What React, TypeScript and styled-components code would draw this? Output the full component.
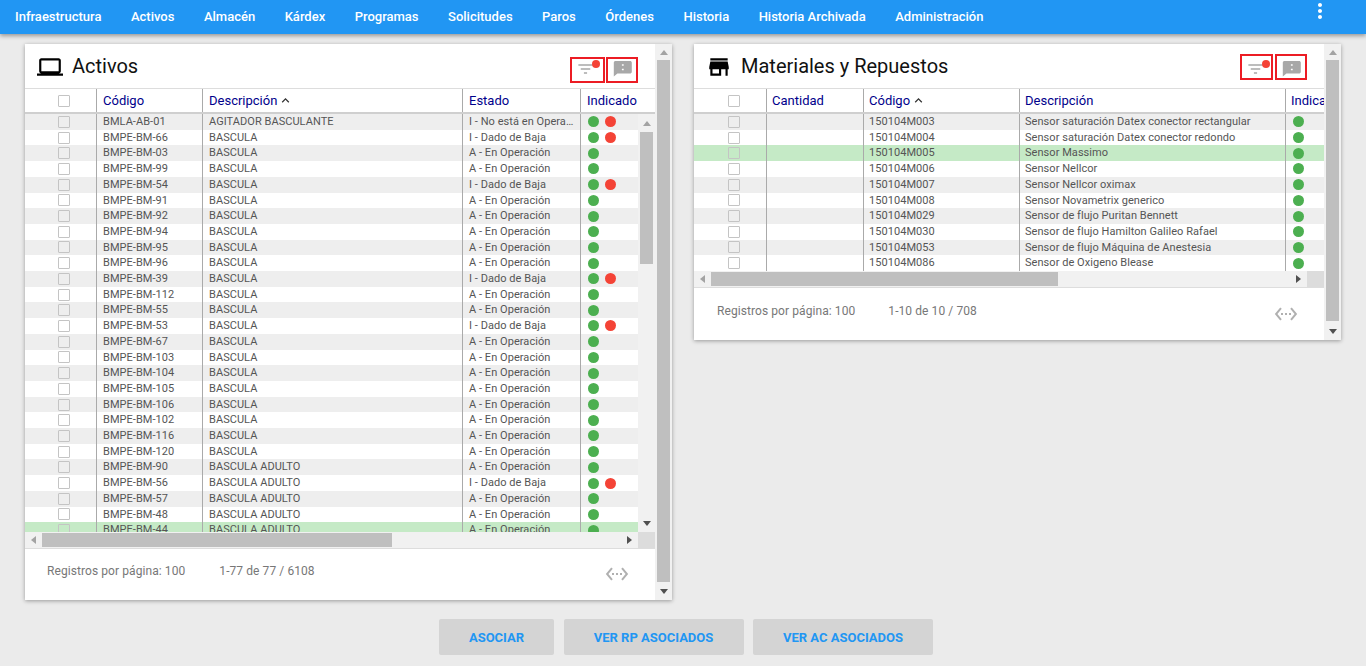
import React from "react";
import styled, { createGlobalStyle } from "styled-components";

const Global = createGlobalStyle`
  html, body { margin: 0; padding: 0; height: 100%; overflow: hidden; background: #ebebeb; }
  body { font-family: Roboto, "Liberation Sans", sans-serif; }
  * { box-sizing: border-box; }
`;

const Page = styled.div`
  width: 1366px;
  height: 666px;
  display: flex;
  flex-direction: column;
  background: #ebebeb;
`;
const Nav = styled.nav`
  height: 34px;
  flex: none;
  display: flex;
  align-items: center;
  background: #2196f3;
  padding: 0 34px 0 15px;
  gap: 29.5px;
  box-shadow: 0 2px 4px rgba(0, 0, 0, 0.35);
  position: relative;
  z-index: 2;
`;
const NavItem = styled.a`
  color: #fff;
  font-size: 13px;
  font-weight: 500;
  line-height: 34px;
`;
const NavMenu = styled.svg`
  margin-left: auto;
  width: 24px;
  height: 24px;
  margin-top: -13px;
  fill: #fff;
`;
const Columns = styled.main`
  display: flex;
  align-items: flex-start;
  gap: 22px;
  padding: 10px 25px 0;
  height: 575px;
  flex: none;
`;
const Card = styled.section<{ $pad: number }>`
  --cell-pad: ${(p) => p.$pad}px;
  width: 647px;
  display: flex;
  background: #fff;
  box-shadow: 0 1px 4px rgba(0, 0, 0, 0.35);
`;
const CardBody = styled.div`
  flex: 1;
  min-width: 0;
  display: flex;
  flex-direction: column;
`;
const CardHead = styled.header`
  height: 44px;
  display: flex;
  padding: 0 17px 0 12px;
  align-items: flex-start;
  gap: 9px;
  & > .title-icon { width: 26px; height: 26px; margin-top: 10px; fill: #000; flex: none; }
`;
const Title = styled.h2`
  margin: 9px 0 0;
  font-size: 20px;
  line-height: 26px;
  font-weight: 400;
  color: #111;
`;
const ActionGroup = styled.div<{ $top: number; $gap: number }>`
  margin-left: auto;
  margin-top: ${(p) => p.$top}px;
  display: flex;
  gap: ${(p) => p.$gap}px;
`;
const ActionBox = styled.div<{ $w: number }>`
  position: relative;
  width: ${(p) => p.$w}px;
  height: 26px;
  border: 2px solid #ec1c24;
  display: flex;
  align-items: center;
  justify-content: center;
`;
const FilterIcon = styled.svg<{ $dx: number; $dy: number }>`
  width: 19px;
  height: 19px;
  transform: translate(${(p) => p.$dx}px, ${(p) => p.$dy}px);
  fill: #a8a8a8;
`;
const ChatIcon = styled.svg<{ $dy: number }>`
  width: 21.6px;
  height: 18.6px;
  transform: translate(1px, ${(p) => p.$dy}px);
  fill: #a8a8a8;
`;
const Badge = styled.span<{ $top: number; $right: number }>`
  position: absolute;
  top: ${(p) => p.$top}px;
  right: ${(p) => p.$right}px;
  width: 8px;
  height: 8px;
  border-radius: 50%;
  background: #f44336;
`;
const HeadRow = styled.div<{ $cols: string }>`
  display: grid;
  grid-template-columns: ${(p) => p.$cols};
  height: 26px;
  border-top: 1px solid #ddd;
  border-bottom: 2px solid #cfcfcf;
  overflow: hidden;
`;
const HeadCell = styled.div`
  display: flex;
  align-items: center;
  padding-left: var(--cell-pad);
  border-left: 1px solid #aaa;
  font-size: 13px;
  font-weight: 400;
  color: #00008b;
  white-space: nowrap;
  overflow: hidden;
  & > svg { width: 15px; height: 15px; fill: #333; margin-left: 1px; }
`;
const CheckCell = styled.div<{ $shift: number }>`
  display: flex;
  align-items: center;
  justify-content: center;
  padding-left: ${(p) => p.$shift}px;
`;
const Check = styled.span`
  display: block;
  width: 12px;
  height: 12px;
  background: #fff;
  border: 1px solid #c4c4c4;
  border-radius: 1px;
`;
const FadedCheck = styled(Check)`
  background: transparent;
`;
const TableArea = styled.div`
  display: flex;
`;
const Rows = styled.div<{ $h: number }>`
  flex: 1;
  min-width: 0;
  height: ${(p) => p.$h}px;
  overflow: hidden;
`;
const Row = styled.div<{ $cols: string; $kind: "odd" | "even" | "sel" }>`
  display: grid;
  grid-template-columns: ${(p) => p.$cols};
  height: 15.71px;
  background: ${(p) => (p.$kind === "sel" ? "#c5eac6" : p.$kind === "odd" ? "#eeeeee" : "#fff")};
`;
const Cell = styled.div`
  border-left: 1px solid #aaa;
  padding: 0 5px 0 var(--cell-pad);
  font-size: 11px;
  line-height: 15.71px;
  letter-spacing: 0.05px;
  color: #555;
  white-space: nowrap;
  overflow: hidden;
  text-overflow: ellipsis;
`;
const DotCell = styled.div`
  border-left: 1px solid #aaa;
  padding-left: 7px;
  display: flex;
  align-items: center;
  gap: 6px;
  overflow: hidden;
`;
const Dot = styled.span<{ $red?: boolean }>`
  width: 11px;
  height: 11px;
  flex: none;
  border-radius: 50%;
  background: ${(p) => (p.$red ? "#f44336" : "#4caf50")};
`;
const VBar = styled.div<{ $h?: number }>`
  width: 17px;
  ${(p) => (p.$h ? `height: ${p.$h}px;` : "")}
  flex: none;
  display: flex;
  flex-direction: column;
  background: #f1f1f1;
`;
const VSpacer = styled.div<{ $h: number }>`
  height: ${(p) => p.$h}px;
  flex: none;
  display: flex;
  align-items: center;
  justify-content: center;
`;
const VThumb = styled.div<{ $h: number }>`
  height: ${(p) => p.$h}px;
  flex: none;
  margin: 0 2px;
  background: #bfbfbf;
`;
const VFill = styled.div`
  flex: 1;
  display: flex;
  flex-direction: column;
  justify-content: flex-end;
`;
const ArrowUp = styled.span`
  width: 0;
  height: 0;
  border-left: 4px solid transparent;
  border-right: 4px solid transparent;
  border-bottom: 5px solid #a3a3a3;
`;
const ArrowDown = styled.span`
  width: 0;
  height: 0;
  border-left: 4px solid transparent;
  border-right: 4px solid transparent;
  border-top: 5px solid #505050;
`;
const ArrowLeft = styled.span`
  width: 0;
  height: 0;
  border-top: 4px solid transparent;
  border-bottom: 4px solid transparent;
  border-right: 5px solid #a3a3a3;
`;
const ArrowRight = styled.span`
  width: 0;
  height: 0;
  border-top: 4px solid transparent;
  border-bottom: 4px solid transparent;
  border-left: 5px solid #505050;
`;
const HBar = styled.div`
  height: 16px;
  flex: none;
  display: flex;
  background: #f1f1f1;
`;
const HEnd = styled.div`
  width: 17px;
  flex: none;
  display: flex;
  align-items: center;
  justify-content: center;
`;
const HThumb = styled.div<{ $w: number }>`
  width: ${(p) => p.$w}px;
  margin: 1px 0;
  background: #bfbfbf;
`;
const HFill = styled.div`
  flex: 1;
`;
const Corner = styled.div`
  width: 17px;
  flex: none;
  background: #dcdcdc;
`;
const Footer = styled.footer<{ $h: number; $top: number; $left: number; $gap: number }>`
  height: ${(p) => p.$h}px;
  border-top: 1px solid #ddd;
  display: flex;
  padding: 0 26px 0 ${(p) => p.$left}px;
  font-size: 12px;
  letter-spacing: 0.08px;
  color: #777;
  & > span { margin-top: ${(p) => p.$top}px; line-height: 14px; }
  & > span + span { margin-left: ${(p) => p.$gap}px; }
  & > svg { margin: ${(p) => p.$top - 2}px 0 0 auto; width: 24px; height: 24px; fill: #b0b0b0; }
`;
const Buttons = styled.div`
  display: flex;
  justify-content: center;
  gap: 9.5px;
  padding-left: 6px;
  margin-top: 10px;
`;
const Btn = styled.button<{ $w: number }>`
  width: ${(p) => p.$w}px;
  height: 36px;
  border: 0;
  border-radius: 2px;
  background: #d4d4d4;
  color: #2196f3;
  font: 700 13px Roboto, sans-serif;
  text-transform: uppercase;
`;

const NAV = ["Infraestructura","Activos","Almacén","Kárdex","Programas","Solicitudes","Paros","Órdenes","Historia","Historia Archivada","Administración"];

const Ic = {
  laptop: "M20 18c1.1 0 1.99-.9 1.99-2L22 6c0-1.1-.9-2-2-2H4c-1.1 0-2 .9-2 2v10c0 1.1.9 2 2 2H0v2h24v-2h-4zM4 6h16v10H4V6z",
  store: "M20 4H4v2h16V4zm1 10v-2l-1-5H4l-1 5v2h1v6h10v-6h4v6h2v-6h1zm-9 4H6v-4h6v4z",
  filter: "M10 18h4v-2h-4v2zM3 6v2h18V6H3zm3 7h12v-2H6v2z",
  chat: "M20 2H4c-1.1 0-1.99.9-1.99 2L2 22l4-4h14c1.1 0 2-.9 2-2V4c0-1.1-.9-2-2-2zm-7 6h-2V6h2v2zm0 6h-2v-2h2v2z",
  code: "M7.77 6.76L6.23 5.48.82 12l5.41 6.52 1.54-1.28L3.42 12l4.35-5.24zM7 13h2v-2H7v2zm10-2h-2v2h2v-2zm-6 2h2v-2h-2v2zm6.77-7.52l-1.54 1.28L20.58 12l-4.35 5.24 1.54 1.28L23.18 12l-5.41-6.52z",
  up: "M12 8l-6 6 1.41 1.41L12 10.83l4.59 4.58L18 14z",
  more: "M12 8c1.1 0 2-.9 2-2s-.9-2-2-2-2 .9-2 2 .9 2 2 2zm0 2c-1.1 0-2 .9-2 2s.9 2 2 2 2-.9 2-2-.9-2-2-2zm0 6c-1.1 0-2 .9-2 2s.9 2 2 2 2-.9 2-2-.9-2-2-2z",
};
const Icon = ({ d, className }: { d: string; className?: string }) => (
  <svg viewBox="0 0 24 24" className={className}><path d={d} /></svg>
);

const A = "A - En Operación";
const I = "I - Dado de Baja";
const B = "BASCULA";
const BA = "BASCULA ADULTO";
const ASSETS: [string, string, string, boolean?][] = [
  ["BMLA-AB-01", "AGITADOR BASCULANTE", "I - No está en Operación", true],
  ["BMPE-BM-66", B, I, true], ["BMPE-BM-03", B, A], ["BMPE-BM-99", B, A],
  ["BMPE-BM-54", B, I, true], ["BMPE-BM-91", B, A], ["BMPE-BM-92", B, A],
  ["BMPE-BM-94", B, A], ["BMPE-BM-95", B, A], ["BMPE-BM-96", B, A],
  ["BMPE-BM-39", B, I, true], ["BMPE-BM-112", B, A], ["BMPE-BM-55", B, A],
  ["BMPE-BM-53", B, I, true], ["BMPE-BM-67", B, A], ["BMPE-BM-103", B, A],
  ["BMPE-BM-104", B, A], ["BMPE-BM-105", B, A], ["BMPE-BM-106", B, A],
  ["BMPE-BM-102", B, A], ["BMPE-BM-116", B, A], ["BMPE-BM-120", B, A],
  ["BMPE-BM-90", BA, A], ["BMPE-BM-56", BA, I, true], ["BMPE-BM-57", BA, A],
  ["BMPE-BM-48", BA, A], ["BMPE-BM-44", BA, A],
];
const PARTS: [string, string][] = [
  ["150104M003", "Sensor saturación Datex conector rectangular"],
  ["150104M004", "Sensor saturación Datex conector redondo"],
  ["150104M005", "Sensor Massimo"],
  ["150104M006", "Sensor Nellcor"],
  ["150104M007", "Sensor Nellcor oximax"],
  ["150104M008", "Sensor Novametrix generico"],
  ["150104M029", "Sensor de flujo Puritan Bennett"],
  ["150104M030", "Sensor de flujo Hamilton Galileo Rafael"],
  ["150104M053", "Sensor de flujo Máquina de Anestesia"],
  ["150104M086", "Sensor de Oxigeno Blease"],
];

const COLS_L = "71px 106px 260px 118px 1fr";
const COLS_R = "72px 97px 156px 266px 1fr";

const kind = (i: number, sel: number): "odd" | "even" | "sel" =>
  i === sel ? "sel" : i % 2 === 0 ? "odd" : "even";

type ActionsProps = { top: number; gap: number; w1: number; dx: number; dy: number; badgeTop: number; badgeRight: number };
const Actions = ({ top, gap, w1, dx, dy, badgeTop, badgeRight }: ActionsProps) => (
  <ActionGroup $top={top} $gap={gap}>
    <ActionBox $w={w1}>
      <FilterIcon viewBox="0 0 24 24" $dx={dx} $dy={dy}><path d={Ic.filter} /></FilterIcon>
      <Badge $top={badgeTop} $right={badgeRight} />
    </ActionBox>
    <ActionBox $w={32}>
      <ChatIcon viewBox="0 0 24 24" preserveAspectRatio="none" $dy={dy}><path d={Ic.chat} /></ChatIcon>
    </ActionBox>
  </ActionGroup>
);

const OuterScroll = ({ thumb }: { thumb: number }) => (
  <VBar>
    <VSpacer $h={16}><ArrowUp /></VSpacer>
    <VThumb $h={thumb} />
    <VFill><VSpacer $h={18}><ArrowDown /></VSpacer></VFill>
  </VBar>
);

const HScroll = ({ thumb }: { thumb: number }) => (
  <HBar>
    <HEnd><ArrowLeft /></HEnd>
    <HThumb $w={thumb} />
    <HFill />
    <HEnd><ArrowRight /></HEnd>
    <Corner />
  </HBar>
);

export default function App() {
  return (
    <Page>
      <Global />
      <Nav>
        {NAV.map((n) => <NavItem key={n}>{n}</NavItem>)}
        <NavMenu viewBox="0 0 24 24"><path d={Ic.more} /></NavMenu>
      </Nav>
      <Columns>
        <Card $pad={6}>
          <CardBody>
            <CardHead>
              <Icon d={Ic.laptop} className="title-icon" />
              <Title>Activos</Title>
              <Actions top={13} gap={1} w1={35} dx={-2} dy={-1.5} badgeTop={1} badgeRight={3} />
            </CardHead>
            <HeadRow $cols={COLS_L + " 17px"}>
              <CheckCell $shift={6}><Check /></CheckCell>
              <HeadCell>Código</HeadCell>
              <HeadCell>Descripción<Icon d={Ic.up} /></HeadCell>
              <HeadCell>Estado</HeadCell>
              <HeadCell>Indicado</HeadCell>
            </HeadRow>
            <TableArea>
              <Rows $h={418}>
                {ASSETS.map((r, i) => (
                  <Row key={r[0]} $cols={COLS_L} $kind={kind(i, 26)}>
                    <CheckCell $shift={6}>{i % 2 === 0 ? <FadedCheck /> : <Check />}</CheckCell>
                    <Cell>{r[0]}</Cell>
                    <Cell>{r[1]}</Cell>
                    <Cell>{r[2]}</Cell>
                    <DotCell><Dot />{r[3] && <Dot $red />}</DotCell>
                  </Row>
                ))}
              </Rows>
              <VBar $h={418}>
                <VSpacer $h={18}><ArrowUp /></VSpacer>
                <VThumb $h={132} />
                <VFill><VSpacer $h={18}><ArrowDown /></VSpacer></VFill>
              </VBar>
            </TableArea>
            <HScroll thumb={350} />
            <Footer $h={51} $top={15} $left={22} $gap={34}>
              <span>Registros por página: 100</span>
              <span>1-77 de 77 / 6108</span>
              <Icon d={Ic.code} />
            </Footer>
          </CardBody>
          <OuterScroll thumb={522} />
        </Card>
        <Card $pad={5}>
          <CardBody>
            <CardHead>
              <Icon d={Ic.store} className="title-icon" />
              <Title>Materiales y Repuestos</Title>
              <Actions top={10} gap={2} w1={33} dx={-1} dy={1.5} badgeTop={4} badgeRight={1} />
            </CardHead>
            <HeadRow $cols={COLS_R}>
              <CheckCell $shift={7}><Check /></CheckCell>
              <HeadCell>Cantidad</HeadCell>
              <HeadCell>Código<Icon d={Ic.up} /></HeadCell>
              <HeadCell>Descripción</HeadCell>
              <HeadCell>Indicado</HeadCell>
            </HeadRow>
            <Rows $h={157}>
              {PARTS.map((r, i) => (
                <Row key={r[0]} $cols={COLS_R} $kind={kind(i, 2)}>
                  <CheckCell $shift={7}>{i % 2 === 0 ? <FadedCheck /> : <Check />}</CheckCell>
                  <Cell />
                  <Cell>{r[0]}</Cell>
                  <Cell>{r[1]}</Cell>
                  <DotCell><Dot /></DotCell>
                </Row>
              ))}
            </Rows>
            <HScroll thumb={347} />
            <Footer $h={53} $top={16} $left={23} $gap={33}>
              <span>Registros por página: 100</span>
              <span>1-10 de 10 / 708</span>
              <Icon d={Ic.code} />
            </Footer>
          </CardBody>
          <OuterScroll thumb={261} />
        </Card>
      </Columns>
      <Buttons>
        <Btn $w={115}>Asociar</Btn>
        <Btn $w={180}>Ver RP asociados</Btn>
        <Btn $w={180}>Ver AC asociados</Btn>
      </Buttons>
    </Page>
  );
}
